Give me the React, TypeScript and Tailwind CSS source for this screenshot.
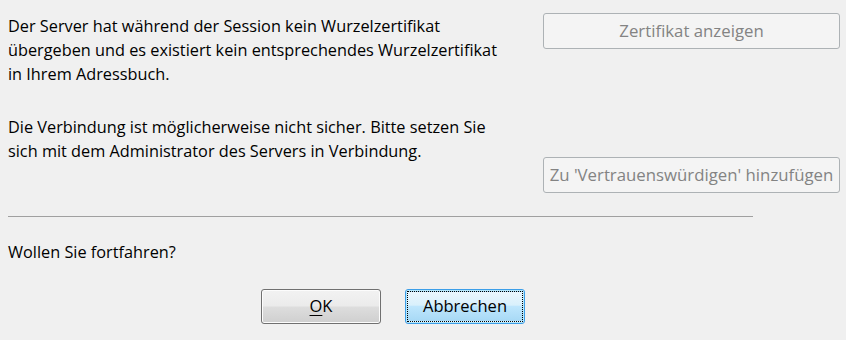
import type { ReactNode } from 'react';

const font = { fontFamily: '"Open Sans", "Noto Sans", sans-serif' };

function DisabledButton({ children }: { children: ReactNode }) {
  return (
    <div className="flex h-[36px] w-[297px] items-center justify-center rounded-[3px] border border-[#adb2b5] bg-[#f4f4f4] text-[16.8px] text-[#838383]">
      {children}
    </div>
  );
}

function PushButton({ children, focused = false }: { children: ReactNode; focused?: boolean }) {
  if (focused) {
    return (
      <div className="h-[35px] w-[120px] rounded-[3px] border border-[#3c9ee8] p-[1px] shadow-[inset_0_0_0_1px_#b5e7fb]">
        <div className="flex h-full w-full items-center justify-center border border-dotted border-black bg-[linear-gradient(to_bottom,#eaf6fd_0%,#d9f0fc_45%,#bee6fd_50%,#a7d9f5_100%)] text-[16.5px] text-black">
          {children}
        </div>
      </div>
    );
  }
  return (
    <div className="flex h-[35px] w-[120px] items-center justify-center rounded-[3px] border border-[#707070] bg-[linear-gradient(to_bottom,#f2f2f2_0%,#ebebeb_48%,#dddddd_52%,#cfcfcf_100%)] text-[16.5px] text-black shadow-[inset_0_0_0_1px_#fcfcfc]">
      {children}
    </div>
  );
}

export default function App() {
  return (
    <div className="h-[340px] w-[846px] overflow-hidden bg-[#f0f0f0] text-black" style={font}>
      <div className="flex justify-between pl-[8px] pr-[6px] pt-[13px]">
        <div className="pt-[1px] text-[16.3px] leading-[24px]">
          <p>
            Der Server hat während der Session kein Wurzelzertifikat
            <br />
            übergeben und es existiert kein entsprechendes Wurzelzertifikat
            <br />
            in Ihrem Adressbuch.
          </p>
          <p className="mt-[29px]">
            Die Verbindung ist möglicherweise nicht sicher. Bitte setzen Sie
            <br />
            sich mit dem Administrator des Servers in Verbindung.
          </p>
        </div>
        <div className="flex flex-col gap-[108px]">
          <DisabledButton>Zertifikat anzeigen</DisabledButton>
          <DisabledButton>Zu 'Vertrauenswürdigen' hinzufügen</DisabledButton>
        </div>
      </div>
      <div className="ml-[8px] mt-[23px] h-px w-[745px] bg-[#a0a0a0]" />
      <p className="ml-[8px] mt-[23px] text-[16.3px] leading-[24px]">Wollen Sie fortfahren?</p>
      <div className="ml-[261px] mt-[25px] flex gap-[24px]">
        <PushButton>
          <span>
            <span className="underline underline-offset-[3px]">O</span>K
          </span>
        </PushButton>
        <PushButton focused>Abbrechen</PushButton>
      </div>
    </div>
  );
}
